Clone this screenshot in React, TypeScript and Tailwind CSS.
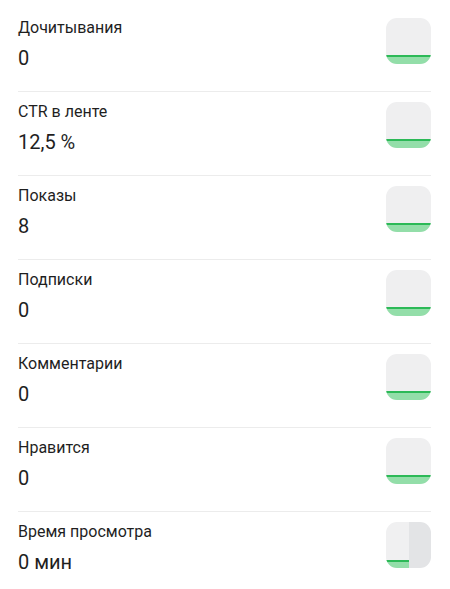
import React from "react";

type Metric = {
  title: string;
  value: string;
  split?: boolean;
};

const metrics: Metric[] = [
  { title: "Дочитывания", value: "0" },
  { title: "CTR в ленте", value: "12,5 %" },
  { title: "Показы", value: "8" },
  { title: "Подписки", value: "0" },
  { title: "Комментарии", value: "0" },
  { title: "Нравится", value: "0" },
  { title: "Время просмотра", value: "0 мин", split: true },
];

// small sparkline-ish thumbnail on the right of each row
const MiniChart: React.FC<{ split?: boolean }> = ({ split }) => {
  if (split) {
    return (
      <div className="w-[45px] h-[46px] rounded-[11px] overflow-hidden flex">
        <div className="w-[23px] h-full bg-[#f0f0f1] flex flex-col justify-end">
          <div className="h-[2px] bg-[#2cb957]" />
          <div className="h-[6px] bg-[#93dea9]" />
        </div>
        <div className="flex-1 h-full bg-[#e3e4e6]" />
      </div>
    );
  }
  return (
    <div className="w-[45px] h-[46px] rounded-[11px] overflow-hidden bg-[#efeff0] flex flex-col justify-end">
      <div className="h-[2px] bg-[#2cb957]" />
      <div className="h-[7px] bg-[#93dea9]" />
    </div>
  );
};

export default function App() {
  return (
    <div
      className="w-[450px] h-[589px] bg-white overflow-hidden pt-[8px] pl-[18px] pr-[19px] text-[#1f1f1f]"
      style={{ fontFamily: "Roboto, 'Noto Sans', sans-serif" }}
    >
      {metrics.map((m, i) => (
        <div
          key={m.title}
          className={`h-[84px] flex justify-between ${i < metrics.length - 1 ? "border-b border-[#ececec]" : ""}`}
        >
          <div className="flex flex-col pt-[9px]">
            <span className="text-[16px] leading-[22px]">{m.title}</span>
            <span className="text-[20px] leading-[26px] mt-[6px]">{m.value}</span>
          </div>
          <div className="pt-[10px]">
            <MiniChart split={m.split} />
          </div>
        </div>
      ))}
    </div>
  );
}
